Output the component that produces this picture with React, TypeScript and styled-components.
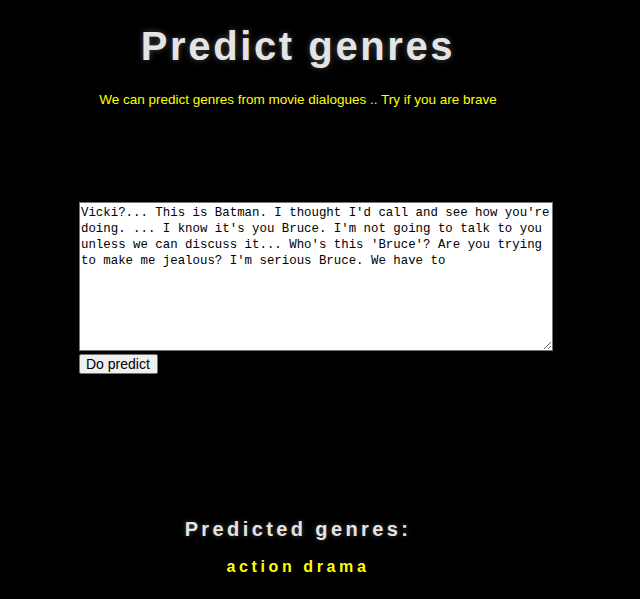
import React from "react";
import styled, { createGlobalStyle } from "styled-components";

const Global = createGlobalStyle`
  html, body { margin: 0; padding: 0; background: #000; }
  body { font-family: "Liberation Sans", Arial, sans-serif; }
`;

const Page = styled.div`
  width: 640px;
  height: 599px;
  background: #000;
  display: flex;
  flex-direction: column;
`;

const Header = styled.header`
  width: 596px;
  display: flex;
  flex-direction: column;
  align-items: center;
  padding-top: 23px;
`;

const Title = styled.h1`
  margin: 0;
  font-size: 40px;
  line-height: 46px;
  font-weight: bold;
  letter-spacing: 2.6px;
  color: #e4e4e4;
  text-shadow: 0 0 6px rgba(160, 160, 160, 0.45);
`;

const Subtitle = styled.p`
  margin: 23px 0 0 0;
  font-size: 13.5px;
  line-height: 16px;
  color: #ffff00;
`;

const Form = styled.form`
  display: flex;
  flex-direction: column;
  align-items: flex-start;
  padding-left: 79px;
  margin-top: 94px;
`;

const Dialogue = styled.textarea`
  box-sizing: border-box;
  width: 474px;
  height: 149px;
  margin: 0;
  padding: 2px 1px;
  border: 1px solid #767676;
  background: #fff;
  color: #000;
  font-family: "Liberation Mono", "DejaVu Sans Mono", monospace;
  font-size: 12.4px;
  line-height: 16px;
  resize: both;
  outline: none;
`;

const Button = styled.button`
  margin-top: 3px;
  height: 20px;
  padding: 0 7px 0 6px;
  font-family: "Liberation Sans", Arial, sans-serif;
  font-size: 14px;
  line-height: 18px;
  color: #000;
  background: #efefef;
  border: 1px solid #767676;
  border-radius: 2px;
`;

const Result = styled.section`
  width: 596px;
  display: flex;
  flex-direction: column;
  align-items: center;
  margin-top: 144px;
`;

const ResultTitle = styled.h2`
  margin: 0;
  font-size: 20px;
  line-height: 23px;
  font-weight: bold;
  letter-spacing: 3.4px;
  color: #e4e4e4;
  text-shadow: 0 0 5px rgba(160, 160, 160, 0.45);
`;

const Genres = styled.div`
  margin-top: 17px;
  font-size: 16px;
  line-height: 18px;
  font-weight: bold;
  letter-spacing: 3.6px;
  color: #ffff00;
`;

const text =
  "Vicki?... This is Batman. I thought I'd call and see how you're doing. ... I know it's you Bruce. I'm not going to talk to you unless we can discuss it... Who's this 'Bruce'? Are you trying to make me jealous? I'm serious Bruce. We have to";

export default function App() {
  return (
    <Page>
      <Global />
      <Header>
        <Title>Predict genres</Title>
        <Subtitle>We can predict genres from movie dialogues .. Try if you are brave</Subtitle>
      </Header>
      <Form onSubmit={(e) => e.preventDefault()}>
        <Dialogue defaultValue={text} spellCheck={false} />
        <Button type="submit">Do predict</Button>
      </Form>
      <Result>
        <ResultTitle>Predicted genres:</ResultTitle>
        <Genres>action drama</Genres>
      </Result>
    </Page>
  );
}
